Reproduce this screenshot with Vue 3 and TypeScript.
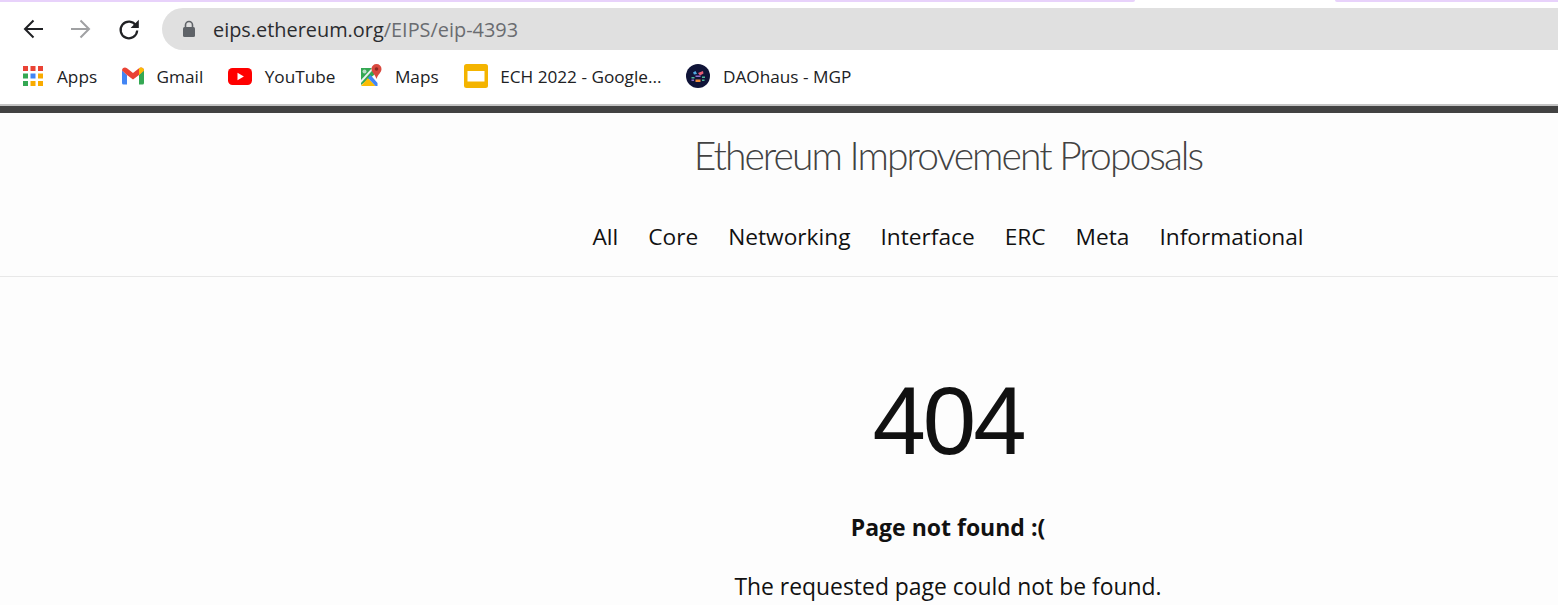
<script setup lang="ts">
const navLinks = ['All', 'Core', 'Networking', 'Interface', 'ERC', 'Meta', 'Informational']
</script>

<template>
  <div class="window">
    <div class="tab-strip">
      <div class="strip-left"></div>
      <div class="strip-right"></div>
    </div>

    <div class="toolbar">
      <button type="button" class="nav-btn first" aria-label="Back">
        <svg width="24" height="24" viewBox="0 0 24 24" fill="none" stroke="#202124" stroke-width="2">
          <path d="M22 12H4M12.5 3.5 4 12l8.500 8.500" />
        </svg>
      </button>
      <button type="button" class="nav-btn" aria-label="Forward">
        <svg width="24" height="24" viewBox="0 0 24 24" fill="none" stroke="#a0a1a3" stroke-width="2">
          <path d="M2 12h18M11.500 3.500 20 12l-8.500 8.500" />
        </svg>
      </button>
      <button type="button" class="nav-btn" aria-label="Reload">
        <svg width="24" height="24" viewBox="0 0 24 24" fill="none">
          <path d="M19 8.600A8.300 8.300 0 1 0 20.200 13.500" stroke="#202124" stroke-width="2.200" />
          <path d="M21.800 2.800V11h-8.200z" fill="#202124" />
        </svg>
      </button>
      <div class="omnibox">
        <svg class="lock" width="14" height="18" viewBox="0 0 14 18">
          <path d="M3.500 7V5a3.500 3.500 0 0 1 7 0v2" fill="none" stroke="#5f6368" stroke-width="1.600" />
          <rect x="1" y="7" width="12" height="10" rx="1.500" fill="#5f6368" />
        </svg>
        <span class="url"><span class="host">eips.ethereum.org</span>/EIPS/eip-4393</span>
      </div>
    </div>

    <div class="bookmarks">
      <a class="bookmark apps">
        <svg width="20" height="20" viewBox="0 0 20 20">
          <rect x="0" y="0" width="5" height="5" fill="#ea4335" />
          <rect x="7.500" y="0" width="5" height="5" fill="#ea4335" />
          <rect x="15" y="0" width="5" height="5" fill="#ea4335" />
          <rect x="0" y="7.500" width="5" height="5" fill="#34a853" />
          <rect x="7.500" y="7.500" width="5" height="5" fill="#4285f4" />
          <rect x="15" y="7.500" width="5" height="5" fill="#f9ab00" />
          <rect x="0" y="15" width="5" height="5" fill="#34a853" />
          <rect x="7.500" y="15" width="5" height="5" fill="#f9ab00" />
          <rect x="15" y="15" width="5" height="5" fill="#f9ab00" />
        </svg>
        <span>Apps</span>
      </a>
      <a class="bookmark">
        <svg width="22" height="18" viewBox="0 0 22 18">
          <path d="M0 3.500V16a1.500 1.500 0 0 0 1.500 1.500H5V8z" fill="#4285f4" />
          <path d="M17 8v9.500h3.500A1.500 1.500 0 0 0 22 16V3.500z" fill="#34a853" />
          <path d="M0 3.500C0 1 2.800-.5 5 1.200L11 6l6-4.800C19.200-.5 22 1 22 3.500L17 8l-6 4.500L5 8z" fill="#ea4335" />
          <path d="M17 1.200C19.200-.5 22 1 22 3.500L17 8z" fill="#fbbc04" />
        </svg>
        <span>Gmail</span>
      </a>
      <a class="bookmark">
        <svg width="24" height="17" viewBox="0 0 24 17">
          <rect width="24" height="17" rx="4.500" fill="#f00" />
          <path d="M9.500 4.800v7.400l6.400-3.700z" fill="#fff" />
        </svg>
        <span>YouTube</span>
      </a>
      <a class="bookmark">
        <svg width="22" height="24" viewBox="0 0 22 24">
          <path d="M1 4h13v7L1 21z" fill="#34a853" />
          <circle cx="4.500" cy="7.500" r="2" fill="#b7dcc3" />
          <path d="M1 22l7-8 7.500 8z" fill="#fbbc04" />
          <path d="M8 14l2.500-3 7 8v3h-2z" fill="#4285f4" />
          <path d="M1 16 12 4h2.500L1 19z" fill="#eef1f2" />
          <path d="M16.500 0A5 5 0 0 0 11.500 5c0 3.500 3.800 5.500 5 10 1.200-4.500 5-6.500 5-10a5 5 0 0 0-5-5z" fill="#d9493f" />
          <circle cx="16.500" cy="5" r="1.800" fill="#8e2a24" />
        </svg>
        <span>Maps</span>
      </a>
      <a class="bookmark">
        <svg width="24" height="24" viewBox="0 0 24 24">
          <rect width="24" height="24" rx="2.500" fill="#f4b400" />
          <rect x="3.500" y="7" width="17" height="10.500" fill="#fff" />
        </svg>
        <span>ECH 2022 - Google...</span>
      </a>
      <a class="bookmark">
        <svg width="24" height="24" viewBox="0 0 24 24">
          <circle cx="12" cy="12" r="12" fill="#101438" />
          <path d="M7 8.500l2.500-1.500 1.500 3-3 .5z" fill="#4fa8e0" />
          <path d="M12 9l5-2 .5 2.500-3.500 2z" fill="#e85d75" />
          <path d="M5.500 13h3v1.500h-3zM16 12.500h3V14h-3z" fill="#4fb89a" />
          <path d="M9.500 11.500h5V13h-5z" fill="#8d6fc9" />
          <path d="M9.500 15.500h5V18h-5z" fill="#f08c3a" />
          <path d="M5.500 15.500h2.500V17H5.500z" fill="#8d6fc9" />
          <path d="M16 15.500h2.500V17H16z" fill="#4fb89a" />
        </svg>
        <span>DAOhaus - MGP</span>
      </a>
    </div>

    <div class="page">
      <header class="site-header">
        <h1 class="site-title">Ethereum Improvement Proposals</h1>
        <nav class="site-nav">
          <a v-for="link in navLinks" :key="link" class="site-link">{{ link }}</a>
        </nav>
      </header>

      <main class="content">
        <h1 class="code">404</h1>
        <p class="lead"><strong>Page not found :(</strong></p>
        <p class="message">The requested page could not be found.</p>
      </main>
    </div>
  </div>
</template>

<style scoped>
.window {
  width: 1558px;
  height: 605px;
  overflow: hidden;
  background: #fff;
  font-family: 'Open Sans', 'Noto Sans', sans-serif;
}

.tab-strip {
  height: 2px;
  display: flex;
  justify-content: space-between;
}

.strip-left {
  width: 1135px;
  background: #e8d2fb;
  border-bottom-right-radius: 2px;
}

.strip-right {
  width: 223px;
  background: #e8d2fb;
  border-bottom-left-radius: 2px;
}

.toolbar {
  height: 48px;
  padding-top: 6px;
  box-sizing: border-box;
  display: flex;
  align-items: center;
}

.nav-btn {
  width: 24px;
  height: 24px;
  padding: 0;
  border: 0;
  margin-right: 24px;
  background: transparent;
  display: flex;
}

.nav-btn.first {
  margin-left: 21px;
}

.omnibox {
  flex: 1;
  height: 42px;
  margin-left: -3px;
  padding-left: 20px;
  display: flex;
  align-items: center;
  background: #e0e0e0;
  border-radius: 21px 0 0 21px;
}

.lock {
  margin-right: 17px;
}

.url {
  font-size: 19.900px;
  color: #6a6c70;
}

.host {
  color: #2b2c2f;
}

.bookmarks {
  height: 56px;
  padding: 0 0 2px 23px;
  box-sizing: border-box;
  display: flex;
  align-items: center;
  gap: 25px;
  background: #fff;
  border-bottom: 2px solid #c4c4c4;
}

.bookmark {
  display: flex;
  align-items: center;
  gap: 12.500px;
  font-size: 17.200px;
  color: #202124;
  white-space: nowrap;
}

.bookmark.apps {
  gap: 14px;
}

.page {
  border-top: 7px solid #424242;
  height: 492px;
  background: #fdfdfd;
  color: #111;
}

.site-header {
  height: 164px;
  box-sizing: border-box;
  padding-left: 338px;
  border-bottom: 1px solid #e8e8e8;
  text-align: center;
}

.site-title {
  margin: 0;
  padding-top: 17px;
  font-family: Lato, 'Open Sans', sans-serif;
  font-size: 39px;
  line-height: 50px;
  font-weight: 300;
  letter-spacing: -1.950px;
  color: #424242;
}

.site-nav {
  margin-top: 40px;
  display: flex;
  justify-content: center;
  gap: 30px;
}

.site-link {
  font-size: 22.700px;
  line-height: 34px;
  color: #111;
}

.content {
  padding-left: 338px;
  text-align: center;
}

.code {
  margin: 0;
  padding-top: 82px;
  font-family: 'Liberation Sans', Arial, sans-serif;
  font-size: 96px;
  line-height: 124px;
  font-weight: 400;
  letter-spacing: -3px;
  color: #111;
}

.lead {
  margin: 28px 0 0;
  font-size: 23px;
  line-height: 32px;
}

.message {
  margin: 28px 0 0;
  font-size: 22.900px;
  line-height: 32px;
}
</style>
